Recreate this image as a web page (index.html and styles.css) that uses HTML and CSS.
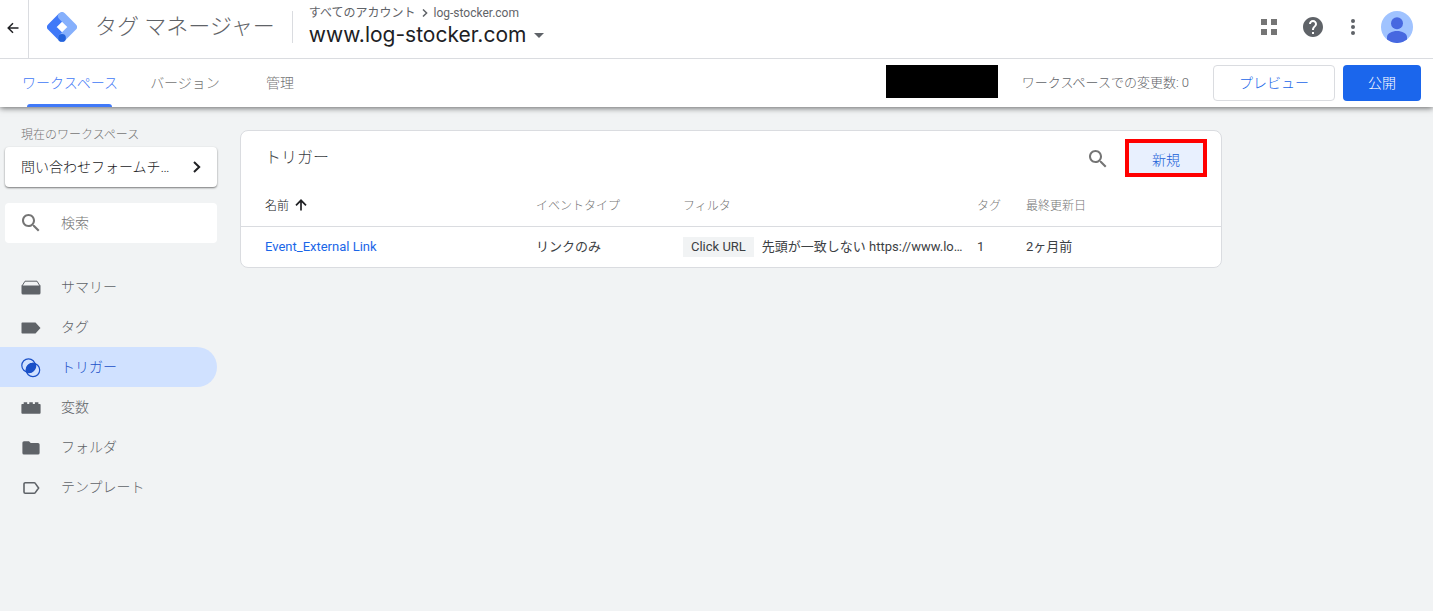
FILE: index.html
```html
<!DOCTYPE html>
<html lang="ja">
<head>
    <meta charset="UTF-8">
    <meta name="viewport" content="width=device-width, initial-scale=1.0">
    <title>タグ マネージャー</title>
    <link rel="stylesheet" href="styles.css">
</head>
<body>
    <header class="header">
        <button class="back" type="button" aria-label="戻る">
            <svg width="12" height="12" viewBox="0 0 12 12" fill="none" stroke="#202124" stroke-width="1.5"><path d="M11.5 6H1.5M6 1.2L1.2 6L6 10.8"/></svg>
        </button>
        <svg class="logo" width="30" height="30" viewBox="0 0 30 30" fill="none" stroke-width="8" stroke-linejoin="round">
            <path d="M15 4.1L4.1 15L15 25.9" stroke="#4079f8"/>
            <path d="M15 4.1L25.9 15L15 25.9" stroke="#86b0fc" stroke-linecap="round"/>
            <circle cx="15" cy="25.9" r="3.9" fill="#2463db"/>
        </svg>
        <div class="product">タグ マネージャー</div>
        <div class="account">
            <div class="breadcrumb">
                <a href="#">すべてのアカウント</a>
                <svg width="6" height="8" viewBox="0 0 6 8" fill="none" stroke="#5f6368" stroke-width="1.5"><path d="M1 0.5L4.6 4L1 7.5"/></svg>
                <a href="#">log-stocker.com</a>
            </div>
            <button class="container-name" type="button">
                www.log-stocker.com
                <svg width="10" height="5" viewBox="0 0 10 5"><path d="M0 0h10L5 5z" fill="#5f6368"/></svg>
            </button>
        </div>
        <div class="header-icons">
            <button type="button" aria-label="アプリ">
                <svg width="16" height="16" viewBox="0 0 16 16" fill="#757575"><path d="M0 0h6v6H0zM10 0h6v6h-6zM0 10h6v6H0zM10 10h6v6h-6z"/></svg>
            </button>
            <button type="button" aria-label="ヘルプ">
                <svg width="24" height="24" viewBox="0 0 24 24" fill="#5f6368"><path d="M12 2C6.48 2 2 6.48 2 12s4.48 10 10 10 10-4.48 10-10S17.52 2 12 2zm1 17h-2v-2h2v2zm2.07-7.75l-.9.92C13.45 12.9 13 13.5 13 15h-2v-.5c0-1.1.45-2.1 1.17-2.83l1.24-1.26c.37-.36.59-.86.59-1.41 0-1.1-.9-2-2-2s-2 .9-2 2H8c0-2.21 1.79-4 4-4s4 1.79 4 4c0 .88-.36 1.68-.93 2.25z"/></svg>
            </button>
            <button type="button" aria-label="メニュー">
                <svg width="24" height="24" viewBox="0 0 24 24" fill="#5f6368"><circle cx="12" cy="6" r="2"/><circle cx="12" cy="12" r="2"/><circle cx="12" cy="18" r="2"/></svg>
            </button>
            <button class="avatar" type="button" aria-label="アカウント">
                <svg width="32" height="32" viewBox="0 0 32 32"><circle cx="16" cy="16" r="16" fill="#a0c3ff"/><circle cx="16" cy="12.3" r="6" fill="#4768e0"/><path d="M6 28.5V26c0-3.5 5-6 10-6s10 2.500 10 6v2.500A16 16 0 0 1 6 28.500z" fill="#4768e0"/></svg>
            </button>
        </div>
    </header>

    <nav class="tabs">
        <a class="tab tab-workspace active" href="#">ワークスペース</a>
        <a class="tab tab-version" href="#">バージョン</a>
        <a class="tab tab-admin" href="#">管理</a>
        <div class="actions">
            <div class="container-id"></div>
            <span class="changes">ワークスペースでの変更数: 0</span>
            <button class="btn btn-preview" type="button">プレビュー</button>
            <button class="btn btn-publish" type="button">公開</button>
        </div>
    </nav>

    <div class="layout">
        <aside class="sidebar">
            <div class="workspace-label">現在のワークスペース</div>
            <button class="workspace" type="button">
                問い合わせフォームチ…
                <svg width="8" height="12" viewBox="0 0 8 12" fill="none" stroke="#202124" stroke-width="2"><path d="M1 1L6.2 6L1 11"/></svg>
            </button>
            <label class="search">
                <svg width="24" height="24" viewBox="0 0 24 24" fill="#757575"><path d="M15.5 14h-.79l-.28-.27C15.41 12.59 16 11.11 16 9.5 16 5.91 13.09 3 9.5 3S3 5.91 3 9.5 5.91 16 9.5 16c1.61 0 3.09-.59 4.23-1.57l.27.28v.79l5 4.99L20.49 19l-4.99-5zm-6 0C7.01 14 5 11.99 5 9.5S7.01 5 9.5 5 14 7.01 14 9.5 11.99 14 9.5 14z"/></svg>
                <input type="text" placeholder="検索" aria-label="検索">
            </label>
            <nav class="menu">
                <a href="#">
                    <svg width="20" height="20" viewBox="0 0 20 20" fill="#5f6368"><path d="M0.5 7.500h19V15a1.500 1.500 0 0 1-1.500 1.500H2A1.500 1.500 0 0 1 0.500 15z"/><path d="M1 8L4 3.200h12L19 8" fill="none" stroke="#5f6368"/></svg>
                    サマリー
                </a>
                <a href="#">
                    <svg width="20" height="20" viewBox="0 0 20 20" fill="#5f6368"><path d="M1.3 4.500H14.500L19.500 10L14.500 15.500H1.300a.8.8 0 0 1-.8-.8V5.300a.8.8 0 0 1 .8-.8z"/></svg>
                    タグ
                </a>
                <a class="active" href="#">
                    <svg width="20" height="20" viewBox="0 0 20 20" fill="none" stroke="#1a50c8" stroke-width="1.2"><circle cx="7.5" cy="7.5" r="6.7"/><circle cx="12" cy="12" r="6.7"/><path d="M14.2 5.700A6.700 6.700 0 0 1 5.700 14.200A6.700 6.700 0 0 1 14.200 5.700z" fill="#1a50c8"/></svg>
                    トリガー
                </a>
                <a href="#">
                    <svg width="20" height="20" viewBox="0 0 20 20" fill="#5f6368"><path d="M1.2 6H2.700V4.200h3.500V6h2.100V4.200h3.500V6h2.100V4.200h3.500V6h1.500a.7.7 0 0 1 .7.7v8.100a.9.9 0 0 1-.9.9H1.300a.9.9 0 0 1-.9-.9V6.700a.7.7 0 0 1 .8-.7z"/></svg>
                    変数
                </a>
                <a href="#">
                    <svg width="20" height="20" viewBox="0 0 20 20" fill="#5f6368"><path d="M3 3.200h5l1.700 1.800H17A1.600 1.600 0 0 1 18.600 6.600V15A1.600 1.600 0 0 1 17 16.600H3A1.600 1.600 0 0 1 1.400 15V4.800A1.600 1.600 0 0 1 3 3.200z"/></svg>
                    フォルダ
                </a>
                <a href="#">
                    <svg width="20" height="20" viewBox="0 0 20 20" fill="none" stroke="#5f6368" stroke-width="1.6"><path d="M4.2 4.800H13.200a1.300 1.300 0 0 1 1.100.6L17.600 10L14.300 14.600a1.300 1.300 0 0 1-1.100.6H4.200a1.200 1.200 0 0 1-1.200-1.200V6a1.200 1.200 0 0 1 1.200-1.200z"/></svg>
                    テンプレート
                </a>
            </nav>
        </aside>

        <main class="content">
            <section class="card">
                <div class="card-header">
                    <h1>トリガー</h1>
                    <button class="card-search" type="button" aria-label="検索">
                        <svg width="24" height="24" viewBox="0 0 24 24" fill="#757575"><path d="M15.5 14h-.79l-.28-.27C15.41 12.59 16 11.11 16 9.5 16 5.91 13.09 3 9.5 3S3 5.91 3 9.5 5.91 16 9.5 16c1.61 0 3.09-.59 4.23-1.57l.27.28v.79l5 4.99L20.49 19l-4.99-5zm-6 0C7.01 14 5 11.99 5 9.5S7.01 5 9.5 5 14 7.01 14 9.5 11.99 14 9.5 14z"/></svg>
                    </button>
                    <button class="btn-new" type="button">新規</button>
                </div>
                <table>
                    <colgroup>
                        <col class="col-name">
                        <col class="col-type">
                        <col class="col-filter">
                        <col class="col-tag">
                        <col class="col-updated">
                    </colgroup>
                    <thead>
                        <tr>
                            <th class="sorted">名前 <svg width="12" height="12" viewBox="0 0 12 12" fill="none" stroke="#202124" stroke-width="1.7"><path d="M6 11.5V1.5M1 6.3L6 1.3L11 6.3"/></svg></th>
                            <th>イベントタイプ</th>
                            <th>フィルタ</th>
                            <th>タグ</th>
                            <th>最終更新日</th>
                        </tr>
                    </thead>
                    <tbody>
                        <tr>
                            <td><a href="#">Event_External Link</a></td>
                            <td>リンクのみ</td>
                            <td><span class="chip">Click URL</span>先頭が一致しない https://www.lo…</td>
                            <td>1</td>
                            <td>2ヶ月前</td>
                        </tr>
                    </tbody>
                </table>
            </section>
        </main>
    </div>
</body>
</html>
```
FILE: styles.css
```css
* {
    box-sizing: border-box;
}
body {
    margin: 0;
    min-height: 100vh;
    background-color: #f1f3f4;
    color: #3c4043;
    font-family: Roboto, "Noto Sans CJK JP", sans-serif;
    font-size: 14px;
    font-weight: 300;
    line-height: 20px;
}
a {
    color: inherit;
    text-decoration: none;
}
button {
    padding: 0;
    border: none;
    background: none;
    color: inherit;
    font: inherit;
    cursor: pointer;
}
svg {
    display: block;
    flex-shrink: 0;
}

/* header */
.header {
    display: flex;
    align-items: center;
    position: relative;
    z-index: 1;
    height: 59px;
    padding-right: 20px;
    background-color: #fff;
    border-bottom: 1px solid #dadce0;
}
.back {
    display: flex;
    align-items: center;
    justify-content: center;
    align-self: stretch;
    width: 29px;
    padding: 0 2px 2px 0;
    border-right: 1px solid #dadce0;
}
.logo {
    margin: 0 18px;
    margin-bottom: 4px;
}
.product {
    padding-bottom: 4px;
    color: #5f6368;
    font-size: 22px;
    line-height: 32px;
    white-space: nowrap;
}
.account {
    margin-left: 17px;
    padding-left: 17px;
    position: relative;
}
.account::before {
    content: "";
    position: absolute;
    left: 0;
    top: 6px;
    height: 32px;
    border-left: 1px solid #dadce0;
}
.breadcrumb {
    display: flex;
    align-items: center;
    gap: 6px;
    color: #5f6368;
    font-size: 12px;
    font-weight: 400;
    line-height: 16px;
}
.container-name {
    display: flex;
    align-items: center;
    gap: 8px;
    padding-bottom: 4px;
    color: #202124;
    font-family: Inter, sans-serif;
    font-size: 21px;
    font-weight: 400;
    line-height: 28px;
}
.header-icons {
    display: flex;
    align-items: center;
    gap: 16px;
    margin-left: auto;
    padding-bottom: 4px;
}
.header-icons button:first-child {
    margin-right: 8px;
}

/* tabs */
.tabs {
    display: flex;
    align-items: center;
    position: relative;
    height: 48px;
    padding-right: 12px;
    background-color: #fff;
    box-shadow: 0 1px 6px rgba(0, 0, 0, 0.6);
}
.tab {
    position: relative;
    color: #757575;
    line-height: 48px;
    text-align: center;
}
.tab-workspace {
    width: 140px;
}
.tab-version {
    width: 90px;
}
.tab-admin {
    width: 100px;
}
.tab.active {
    color: #3f78f6;
}
.tab.active::after {
    content: "";
    position: absolute;
    left: 27px;
    right: 28px;
    bottom: 0;
    height: 3px;
    border-radius: 3px 3px 0 0;
    background-color: #4079f8;
}
.actions {
    display: flex;
    align-items: center;
    margin-left: auto;
}
.container-id {
    width: 112px;
    height: 33px;
    margin-bottom: 4px;
    background-color: #000;
}
.changes {
    margin: 0 24px;
    color: #5f6368;
    font-size: 13px;
}
.btn {
    height: 36px;
    border-radius: 4px;
}
.btn-preview {
    width: 122px;
    margin-right: 8px;
    border: 1px solid #dadce0;
    color: #1a66e8;
}
.btn-publish {
    width: 78px;
    background-color: #1b66ec;
    color: #fff;
}

/* sidebar */
.layout {
    display: flex;
    gap: 23px;
}
.sidebar {
    width: 217px;
    padding-top: 18px;
    flex-shrink: 0;
}
.workspace-label {
    margin-bottom: 2px;
    padding-left: 21px;
    color: #757575;
    font-size: 12px;
}
.workspace {
    display: flex;
    align-items: center;
    justify-content: space-between;
    width: 212px;
    height: 40px;
    margin-left: 5px;
    padding: 0 16px;
    border-radius: 4px;
    background-color: #fff;
    box-shadow: 0 1px 2px rgba(0, 0, 0, 0.5);
    color: #202124;
    white-space: nowrap;
}
.search {
    display: flex;
    align-items: center;
    gap: 18px;
    height: 40px;
    margin: 16px 0 24px 5px;
    padding: 0 14px;
    border-radius: 4px;
    background-color: #fff;
}
.search input {
    flex: 1;
    min-width: 0;
    padding: 0;
    border: none;
    outline: none;
    background: none;
    font: inherit;
}
.search input::placeholder {
    color: #757575;
}
.menu a {
    display: flex;
    align-items: center;
    gap: 20px;
    height: 40px;
    padding-left: 21px;
    color: #5f6368;
}
.menu svg {
    margin-top: 2px;
}
.menu .active {
    border-radius: 0 20px 20px 0;
    background-color: #d0e1ff;
    color: #1a50c8;
}

/* trigger list */
.content {
    flex: 1;
    padding: 23px 24px 0 0;
}
.card {
    max-width: 982px;
    border: 1px solid #dadce0;
    border-radius: 8px;
    background-color: #fff;
    overflow: hidden;
}
.card-header {
    display: flex;
    align-items: center;
    height: 55px;
    padding: 0 14px 0 24px;
}
.card-header h1 {
    margin: 0 auto 0 0;
    padding-bottom: 2px;
    font-size: 16px;
    font-weight: 300;
}
.card-search {
    margin-right: 15px;
}
.btn-new {
    width: 82px;
    height: 38px;
    margin-bottom: 2px;
    padding-top: 4px;
    border: 4px solid #f00;
    background-color: #e8f0fe;
    color: #1a5fd8;
}
table {
    width: 100%;
    border-collapse: collapse;
    table-layout: fixed;
}
.col-name {
    width: 30%;
}
.col-type {
    width: 15%;
}
.col-filter {
    width: 30%;
}
.col-tag {
    width: 5%;
}
.col-updated {
    width: 20%;
}
th,
td {
    height: 40px;
    padding: 0 0 0 1px;
    text-align: left;
    white-space: nowrap;
}
th {
    border-bottom: 1px solid #dadce0;
    color: #757575;
    font-size: 12px;
    font-weight: 300;
}
th:first-child,
td:first-child {
    padding-left: 24px;
}
th.sorted {
    color: #202124;
}
th svg {
    display: inline-block;
    margin-left: 3px;
    vertical-align: -1px;
}
td {
    height: 41px;
    font-size: 13px;
    font-weight: 400;
}
td a {
    color: #1a66e8;
}
.chip {
    display: inline-block;
    margin-right: 8px;
    padding: 0 8px;
    background-color: #f1f3f4;
}
```
